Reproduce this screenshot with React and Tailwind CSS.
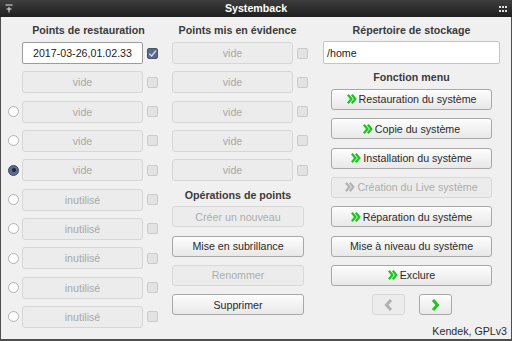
import React from 'react';

const font = { fontFamily: '"Liberation Sans", Arial, sans-serif' };

function Chevrons({ disabled }) {
  const c = disabled ? '#b4b4b4' : '#1fc41f';
  return (
    <svg width="10" height="10" viewBox="0 0 10 10" className="mr-[2px] shrink-0">
      <path d="M0.9 0.8 L4.4 5 L0.9 9.2" fill="none" stroke={c} strokeWidth="2.3" />
      <path d="M4.8 0.8 L8.3 5 L4.8 9.2" fill="none" stroke={c} strokeWidth="2.3" />
    </svg>
  );
}

function Check({ checked }) {
  if (checked) {
    return (
      <div className="w-[11px] h-[11px] rounded-[2px] bg-[#5d6a8b] border border-[#48536d] flex items-center justify-center shrink-0">
        <svg width="9" height="9" viewBox="0 0 9 9">
          <path d="M1.2 4.6 L3.6 7 L8 1.6" fill="none" stroke="#dfe3ee" strokeWidth="1.3" />
        </svg>
      </div>
    );
  }
  return <div className="w-[11px] h-[11px] rounded-[2px] bg-[#e3e3e3] border border-[#cacaca] shrink-0" />;
}

function Radio({ on }) {
  if (on) {
    return (
      <div className="w-[11px] h-[11px] rounded-full bg-[#5d6a8b] border border-[#434e68] flex items-center justify-center shrink-0">
        <div className="w-[4px] h-[4px] rounded-full bg-[#1f2433]" />
      </div>
    );
  }
  return <div className="w-[11px] h-[11px] rounded-full bg-white border border-[#b2b2b2] shrink-0" />;
}

function Field({ text }) {
  return (
    <div className="w-[121px] h-[22px] rounded-[3px] bg-[#ececec] border border-[#d6d6d6] flex items-center justify-center text-[#a9a9a9] shrink-0">
      {text}
    </div>
  );
}

function Btn({ children, disabled, w = 'w-[132px]' }) {
  return (
    <div
      className={
        w +
        ' h-[21px] rounded-[3px] border flex items-center justify-center shrink-0 ' +
        (disabled
          ? 'bg-[#ececec] border-[#d8d8d8] text-[#acacac]'
          : 'bg-gradient-to-b from-[#fdfdfd] to-[#e8e8e8] border-[#a8a8a8] text-[#2a2a2a]')
      }
    >
      {children}
    </div>
  );
}

const Heading = ({ children, cls = '' }) => (
  <div className={'h-[14px] leading-[14px] text-center font-bold text-[#3a3a3a] ' + cls}>{children}</div>
);

export default function App() {
  const col1 = [
    { text: '2017-03-26,01.02.33', first: true, radio: null },
    { text: 'vide', radio: null },
    { text: 'vide', radio: 'off' },
    { text: 'vide', radio: 'off' },
    { text: 'vide', radio: 'on' },
    { text: 'inutilisé', radio: 'off' },
    { text: 'inutilisé', radio: 'off' },
    { text: 'inutilisé', radio: 'off' },
    { text: 'inutilisé', radio: 'off' },
    { text: 'inutilisé', radio: 'off' },
  ];
  const menu = [
    ['Restauration du système', true, false],
    ['Copie du système', true, false],
    ['Installation du système', true, false],
    ['Création du Live système', true, true],
    ['Réparation du système', true, false],
    ['Mise à niveau du système', false, false],
    ['Exclure', true, false],
  ];

  return (
    <div className="w-[512px] h-[341px] flex flex-col text-[10.67px] bg-[#f0f0f0]" style={font}>
      <div className="h-[17px] bg-gradient-to-b from-[#3e3e3e] to-[#1f1f1f] flex items-center px-[5px] shrink-0">
        <svg width="8" height="9" viewBox="0 0 8 9" className="shrink-0">
          <path d="M0.5 1 H7.5 M1.5 5 H6.5 M4 3 V8.5" stroke="#e6e6e6" strokeWidth="1" />
        </svg>
        <div className="flex-1 text-center text-white font-bold leading-[17px]">Systemback</div>
        <div className="grid grid-cols-3 gap-x-[1px] gap-y-[2px]">
          {[0, 1, 2, 3, 4, 5].map(i => (
            <div key={i} className="w-[2px] h-[2px] bg-[#e0e0e0]" />
          ))}
        </div>
      </div>

      <div className="flex-1 flex border-l border-r border-b-2 border-[#4e4e4e] pt-[6px] pl-[7px]">
        <div className="w-[159px] flex flex-col shrink-0">
          <Heading cls="pl-[2px]">Points de restauration</Heading>
          <div className="mt-[5px] flex flex-col gap-[7.33px]">
            {col1.map((r, i) => (
              <div key={i} className="h-[22px] flex items-center">
                <div className="w-[11px] flex">{r.radio && <Radio on={r.radio === 'on'} />}</div>
                <div className="ml-[3px]">
                  {r.first ? (
                    <div className="w-[121px] h-[22px] rounded-[2px] bg-white border border-[#9c9c9c] flex items-center justify-center text-[#222]">
                      {r.text}
                    </div>
                  ) : (
                    <Field text={r.text} />
                  )}
                </div>
                <div className="ml-[4px]">
                  <Check checked={r.first} />
                </div>
              </div>
            ))}
          </div>
        </div>

        <div className="w-[135px] ml-[5px] flex flex-col shrink-0">
          <Heading cls="pr-[4px]">Points mis en évidence</Heading>
          <div className="mt-[5px] flex flex-col gap-[7.33px]">
            {[0, 1, 2, 3, 4].map(i => (
              <div key={i} className="h-[22px] flex items-center">
                <Field text="vide" />
                <div className="ml-[4px]">
                  <Check />
                </div>
              </div>
            ))}
          </div>
          <Heading cls="mt-[6.7px] pr-[3px]">Opérations de points</Heading>
          <div className="mt-[4.3px] flex flex-col gap-[8.33px]">
            <Btn disabled>Créer un nouveau</Btn>
            <Btn>Mise en subrillance</Btn>
            <Btn disabled>Renommer</Btn>
            <Btn>Supprimer</Btn>
          </div>
        </div>

        <div className="w-[177px] ml-[16px] flex flex-col shrink-0">
          <Heading>Répertoire de stockage</Heading>
          <div className="mt-[4.3px] h-[23px] bg-white border border-[#c4c4c4] rounded-[2px] flex items-center pl-[3px] text-[#222]">
            /home
          </div>
          <Heading cls="mt-[5.7px]">Fonction menu</Heading>
          <div className="mt-[5px] flex flex-col items-center gap-[8.33px]">
            {menu.map(([label, chev, dis]) => (
              <Btn key={label} w="w-[161px]" disabled={dis}>
                {chev && <Chevrons disabled={dis} />}
                {label}
              </Btn>
            ))}
            <div className="flex gap-[14px] justify-center">
              <Btn w="w-[33px]" disabled>
                <svg width="11" height="12" viewBox="0 0 11 12">
                  <path d="M8 1 L3.5 6 L8 11" fill="none" stroke="#b0b0b0" strokeWidth="3" />
                </svg>
              </Btn>
              <Btn w="w-[33px]">
                <svg width="11" height="12" viewBox="0 0 11 12">
                  <path d="M3 1 L7.5 6 L3 11" fill="none" stroke="#1fc41f" strokeWidth="3" />
                </svg>
              </Btn>
            </div>
          </div>
          <div className="mt-[8.5px] h-[14px] leading-[14px] text-right mr-[-7px] text-[#2a2a2a]">Kendek, GPLv3</div>
        </div>
      </div>
    </div>
  );
}
